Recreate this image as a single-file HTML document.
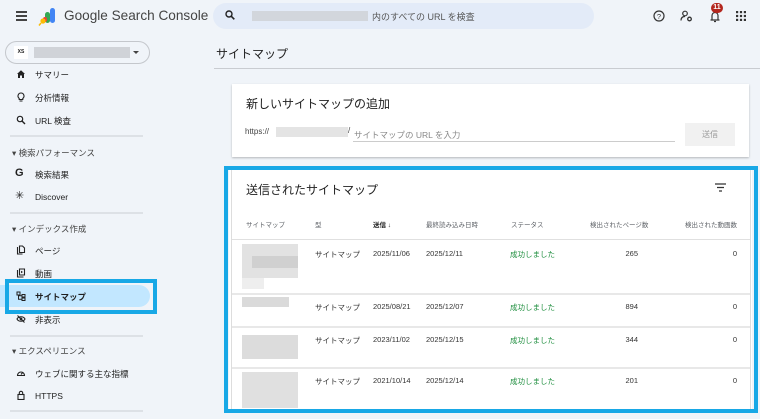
<!DOCTYPE html><html><head><meta charset="utf-8"><style>
*{box-sizing:border-box;margin:0;padding:0}
body{width:760px;height:419px;overflow:hidden;background:#f0f4f9;font-family:"Liberation Sans","Noto Sans CJK JP",sans-serif;color:#1f1f1f;position:relative}
.a{position:absolute;white-space:nowrap}
.nav{font-size:8.5px;color:#1f1f1f}
.sec{font-size:8.5px;color:#444}
.sep{position:absolute;left:10px;width:133px;height:2px;background:#dde1e6}
.ic{position:absolute;left:16px;width:10px;height:10px}
.card{position:absolute;background:#fff;box-shadow:0 1px 2px rgba(0,0,0,.25)}
.th{font-size:6.5px;color:#5f6368;top:219px}
.td{font-size:7.5px;color:#333}
.ok{color:#1e8e3e}
.blur{position:absolute;background:#ddd}
</style></head><body>
<div class="a" style="left:16px;top:11px;width:11px;height:2px;background:#444;box-shadow:0 4px 0 #444,0 8px 0 #444"></div>
<svg class="a" style="left:38px;top:6px" width="20" height="20" viewBox="0 0 20 20"><rect x="12" y="2" width="5" height="15" rx="2.5" fill="#4285f4"/><rect x="7" y="6" width="5" height="11" rx="2.5" fill="#34a853"/><rect x="5" y="11" width="4" height="5" rx="2" fill="#ea4335"/><circle cx="5" cy="15" r="2.6" fill="#fbbc04"/><line x1="3" y1="17" x2="1" y2="19.5" stroke="#fbbc04" stroke-width="1.5"/></svg>
<div class="a" style="left:64px;top:8px;font-size:13.6px;color:#444">Google Search Console</div>
<div class="a" style="left:213px;top:3px;width:381px;height:26px;border-radius:13px;background:#e3ebf8"></div>
<svg class="a" style="left:225px;top:10px" width="10" height="10" viewBox="0 0 10 10"><circle cx="4" cy="4" r="3" fill="none" stroke="#222" stroke-width="1.4"/><line x1="6.2" y1="6.2" x2="9.3" y2="9.3" stroke="#222" stroke-width="1.6"/></svg>
<div class="a" style="left:252px;top:11px;width:116px;height:10px;background:#d2d6dc"></div>
<div class="a" style="left:372px;top:10px;font-size:9px;color:#555">内のすべての URL を検査</div>
<svg class="a" style="left:653px;top:10px" width="12" height="12" viewBox="0 0 12 12"><circle cx="6" cy="6" r="5" fill="none" stroke="#333" stroke-width="1.2"/><text x="6" y="8.8" font-size="7.5" text-anchor="middle" fill="#333" font-family="Liberation Sans">?</text></svg>
<svg class="a" style="left:680px;top:10px" width="13" height="12" viewBox="0 0 13 12"><circle cx="5" cy="3.5" r="2.3" fill="none" stroke="#333" stroke-width="1.2"/><path d="M1 10.5c0-3 2-4 4-4" fill="none" stroke="#333" stroke-width="1.2"/><circle cx="9.5" cy="9" r="1.8" fill="none" stroke="#333" stroke-width="1.3"/></svg>
<svg class="a" style="left:709px;top:9px" width="12" height="14" viewBox="0 0 12 14"><path d="M3 11V6.5a3 3 0 016 0V11M1.5 11h9M5 12.5h2" fill="none" stroke="#333" stroke-width="1.2"/></svg>
<div class="a" style="left:711px;top:3px;width:12px;height:10px;border-radius:6px;background:#b3261e;color:#fff;font-size:7px;font-weight:bold;text-align:center;line-height:10px">11</div>
<svg class="a" style="left:736px;top:11px" width="10" height="10" viewBox="0 0 10 10" fill="#333"><rect x="0" y="0" width="2.2" height="2.2"/><rect x="3.9" y="0" width="2.2" height="2.2"/><rect x="7.8" y="0" width="2.2" height="2.2"/><rect x="0" y="3.9" width="2.2" height="2.2"/><rect x="3.9" y="3.9" width="2.2" height="2.2"/><rect x="7.8" y="3.9" width="2.2" height="2.2"/><rect x="0" y="7.8" width="2.2" height="2.2"/><rect x="3.9" y="7.8" width="2.2" height="2.2"/><rect x="7.8" y="7.8" width="2.2" height="2.2"/></svg>
<div class="a" style="left:5px;top:41px;width:145px;height:23px;border:1px solid #c4c7cc;border-radius:12px;background:#f0f4f9"></div>
<div class="a" style="left:14px;top:46px;width:14px;height:13px;background:#fff;font-size:5px;font-weight:bold;text-align:center;line-height:13px">XS</div>
<div class="a" style="left:34px;top:47px;width:96px;height:11px;background:#d0d3d8"></div>
<div class="a" style="left:133px;top:51px;border:3px solid transparent;border-top:3px solid #444"></div>
<svg class="ic" style="top:69px" viewBox="0 0 10 10"><path d="M1 5L5 1.2 9 5H8v4H6V6.5H4V9H2V5z" fill="#222"/></svg>
<div class="a nav" style="left:35px;top:69px">サマリー</div>
<svg class="ic" style="top:92px" viewBox="0 0 10 10"><path d="M5 1a3 3 0 00-1.8 5.4V7.5h3.6V6.4A3 3 0 005 1zM3.5 9h3" fill="none" stroke="#222" stroke-width="1.1"/></svg>
<div class="a nav" style="left:35px;top:92px">分析情報</div>
<svg class="ic" style="top:115px" viewBox="0 0 10 10"><circle cx="4" cy="4" r="2.7" fill="none" stroke="#222" stroke-width="1.2"/><line x1="6" y1="6" x2="9" y2="9" stroke="#222" stroke-width="1.4"/></svg>
<div class="a nav" style="left:35px;top:115px">URL 検査</div>
<div class="sep" style="top:135px"></div>
<div class="a sec" style="left:12px;top:147px">▾ 検索パフォーマンス</div>
<div class="a" style="left:15px;top:167px;font-size:11px;font-weight:bold">G</div>
<div class="a nav" style="left:35px;top:169px">検索結果</div>
<div class="a" style="left:15px;top:189px;font-size:11px">✳</div>
<div class="a nav" style="left:35px;top:192px">Discover</div>
<div class="sep" style="top:212px"></div>
<div class="a sec" style="left:12px;top:223px">▾ インデックス作成</div>
<svg class="ic" style="top:245px" viewBox="0 0 10 10"><path d="M1.5 2v7h5M3.5 1h3l2 2v4.5h-5z" fill="none" stroke="#222" stroke-width="1.1"/></svg>
<div class="a nav" style="left:35px;top:245px">ページ</div>
<svg class="ic" style="top:268px" viewBox="0 0 10 10"><path d="M1.5 2v7h6M3.5 1h5v6h-5z" fill="none" stroke="#222" stroke-width="1.1"/><path d="M5 2.8l2 1.2-2 1.2z" fill="#222"/></svg>
<div class="a nav" style="left:35px;top:268px">動画</div>
<div class="a" style="left:0;top:285px;width:150px;height:22px;border-radius:0 11px 11px 0;background:#c2e7ff"></div>
<div class="a" style="left:5px;top:279px;width:152px;height:35px;border:4px solid #18a8e6"></div>
<svg class="ic" style="top:291px" viewBox="0 0 10 10"><rect x="1" y="1" width="3" height="3" fill="none" stroke="#222" stroke-width="1"/><rect x="6" y="3.5" width="3" height="2.5" fill="none" stroke="#222" stroke-width="1"/><rect x="6" y="7" width="3" height="2.5" fill="none" stroke="#222" stroke-width="1"/><path d="M2.5 4v4.2H6M2.5 4.8H6" fill="none" stroke="#222" stroke-width="1"/></svg>
<div class="a nav" style="left:35px;top:291px;font-weight:bold">サイトマップ</div>
<svg class="ic" style="top:314px" viewBox="0 0 10 10"><path d="M1 5c1.5-3 6.5-3 8 0-1.5 3-6.5 3-8 0z" fill="none" stroke="#222" stroke-width="1.1"/><circle cx="5" cy="5" r="1.4" fill="#222"/><line x1="1.5" y1="1.5" x2="8.5" y2="8.5" stroke="#222" stroke-width="1.1"/></svg>
<div class="a nav" style="left:35px;top:314px">非表示</div>
<div class="sep" style="top:335px"></div>
<div class="a sec" style="left:12px;top:345px">▾ エクスペリエンス</div>
<svg class="ic" style="top:368px" viewBox="0 0 10 10"><path d="M1.5 7.5a3.5 3.5 0 117 0z" fill="none" stroke="#222" stroke-width="1.1"/><line x1="5" y1="6.5" x2="6.8" y2="4.4" stroke="#222" stroke-width="1.1"/></svg>
<div class="a nav" style="left:35px;top:368px">ウェブに関する主な指標</div>
<svg class="ic" style="top:390px" viewBox="0 0 10 10"><rect x="2" y="4.5" width="6" height="5" fill="none" stroke="#222" stroke-width="1.1"/><path d="M3.3 4.5V3a1.7 1.7 0 013.4 0v1.5" fill="none" stroke="#222" stroke-width="1.1"/></svg>
<div class="a nav" style="left:35px;top:391px">HTTPS</div>
<div class="sep" style="top:410px"></div>
<div class="a" style="left:216px;top:45px;font-size:12px">サイトマップ</div>
<div class="a" style="left:214px;top:68px;width:546px;height:1px;background:#c9ccd1"></div>
<div class="card" style="left:232px;top:84px;width:517px;height:73px"></div>
<div class="a" style="left:246px;top:95px;font-size:12px">新しいサイトマップの追加</div>
<div class="a" style="left:245px;top:127px;font-size:8px;color:#444">https://</div>
<div class="a" style="left:276px;top:127px;width:72px;height:10px;background:#e4e4e4"></div>
<div class="a" style="left:348px;top:126px;font-size:8px;color:#444">/</div>
<div class="a" style="left:354px;top:129px;font-size:8.5px;color:#888">サイトマップの URL を入力</div>
<div class="a" style="left:353px;top:141px;width:322px;height:1px;background:#ccc"></div>
<div class="a" style="left:685px;top:123px;width:50px;height:23px;background:#f1f1f1;font-size:8px;color:#999;text-align:center;line-height:23px">送信</div>
<div class="a" style="left:224px;top:166px;width:534px;height:247px;border:4px solid #18a8e6"></div>
<div class="a" style="left:229px;top:170px;width:523px;height:239px;background:#fff"></div>
<div class="a" style="left:231px;top:170px;width:1px;height:239px;background:#ddd"></div>
<div class="a" style="left:750px;top:170px;width:1px;height:239px;background:#ddd"></div>
<div class="a" style="left:246px;top:181px;font-size:12px">送信されたサイトマップ</div>
<svg class="a" style="left:715px;top:183px" width="11" height="9" viewBox="0 0 11 9"><path d="M0 1h11M2 4.5h7M4 8h3" stroke="#333" stroke-width="1.2"/></svg>
<div class="a th" style="left:246px">サイトマップ</div>
<div class="a th" style="left:315px">型</div>
<div class="a th" style="left:373px;color:#222;font-weight:bold">送信 ↓</div>
<div class="a th" style="left:426px">最終読み込み日時</div>
<div class="a th" style="left:511px">ステータス</div>
<div class="a th" style="left:590px;width:49px;text-align:right">検出されたページ数</div>
<div class="a th" style="left:680px;width:57px;text-align:right">検出された動画数</div>
<div class="a" style="left:232px;top:239px;width:518px;height:1px;background:#e0e0e0"></div>
<div class="a" style="left:232px;top:293px;width:518px;height:2px;background:#e8e8e8"></div>
<div class="a" style="left:232px;top:326px;width:518px;height:2px;background:#e8e8e8"></div>
<div class="a" style="left:232px;top:367px;width:518px;height:2px;background:#e8e8e8"></div>
<div class="blur" style="left:242px;top:244px;width:56px;height:34px;background:#e2e2e2"></div><div class="blur" style="left:252px;top:256px;width:46px;height:12px;background:#d0d0d0"></div><div class="blur" style="left:242px;top:278px;width:22px;height:11px;background:#eee"></div>
<div class="blur" style="left:242px;top:297px;width:47px;height:10px;background:#dadada"></div>
<div class="blur" style="left:242px;top:335px;width:56px;height:24px;background:#dcdcdc"></div>
<div class="blur" style="left:242px;top:372px;width:56px;height:36px;background:#e0e0e0"></div>
<div class="a td" style="left:315px;top:249px">サイトマップ</div><div class="a td" style="left:373px;top:249px">2025/11/06</div><div class="a td" style="left:426px;top:249px">2025/12/11</div><div class="a td ok" style="left:510px;top:249px">成功しました</div><div class="a td" style="left:600px;top:249px;width:38px;text-align:right">265</div><div class="a td" style="left:700px;top:249px;width:37px;text-align:right">0</div>
<div class="a td" style="left:315px;top:302px">サイトマップ</div><div class="a td" style="left:373px;top:302px">2025/08/21</div><div class="a td" style="left:426px;top:302px">2025/12/07</div><div class="a td ok" style="left:510px;top:302px">成功しました</div><div class="a td" style="left:600px;top:302px;width:38px;text-align:right">894</div><div class="a td" style="left:700px;top:302px;width:37px;text-align:right">0</div>
<div class="a td" style="left:315px;top:335px">サイトマップ</div><div class="a td" style="left:373px;top:335px">2023/11/02</div><div class="a td" style="left:426px;top:335px">2025/12/15</div><div class="a td ok" style="left:510px;top:335px">成功しました</div><div class="a td" style="left:600px;top:335px;width:38px;text-align:right">344</div><div class="a td" style="left:700px;top:335px;width:37px;text-align:right">0</div>
<div class="a td" style="left:315px;top:376px">サイトマップ</div><div class="a td" style="left:373px;top:376px">2021/10/14</div><div class="a td" style="left:426px;top:376px">2025/12/14</div><div class="a td ok" style="left:510px;top:376px">成功しました</div><div class="a td" style="left:600px;top:376px;width:38px;text-align:right">201</div><div class="a td" style="left:700px;top:376px;width:37px;text-align:right">0</div>
</body></html>
